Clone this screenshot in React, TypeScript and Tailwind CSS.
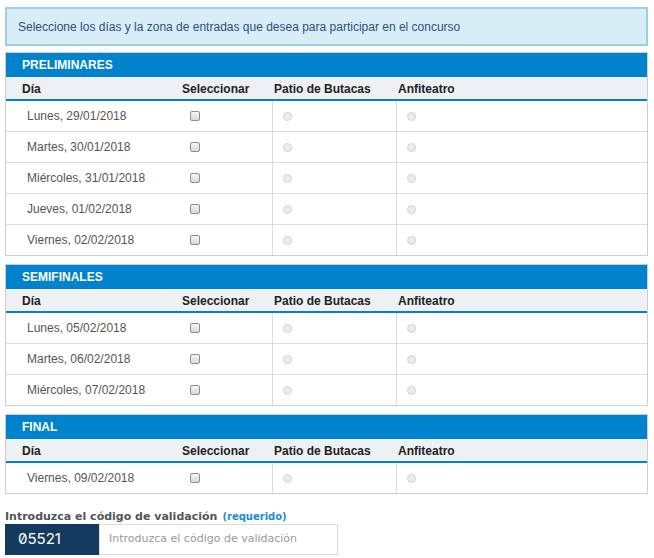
import React from "react";

type Section = { title: string; days: string[] };

const sections: Section[] = [
  {
    title: "PRELIMINARES",
    days: [
      "Lunes, 29/01/2018",
      "Martes, 30/01/2018",
      "Miércoles, 31/01/2018",
      "Jueves, 01/02/2018",
      "Viernes, 02/02/2018",
    ],
  },
  {
    title: "SEMIFINALES",
    days: ["Lunes, 05/02/2018", "Martes, 06/02/2018", "Miércoles, 07/02/2018"],
  },
  { title: "FINAL", days: ["Viernes, 09/02/2018"] },
];

function Checkbox() {
  return (
    <span className="block h-[10px] w-[10px] rounded-[2px] border border-[#8f8f8f] bg-gradient-to-b from-[#f4f4f4] to-[#d9d9d9]" />
  );
}

function Radio() {
  return <span className="block h-[9px] w-[9px] rounded-full border border-[#d2d2d2] bg-[#ececec]" />;
}

function Table({ section }: { section: Section }) {
  return (
    <div className="border border-[#cdcdcd]">
      <div className="flex h-[24px] items-center bg-[#0083cc] pl-[16px] text-[12px] font-bold text-white">
        {section.title}
      </div>
      <div className="grid h-[24px] grid-cols-[170px_96px_124px_1fr] items-center border-b-2 border-[#0083cc] bg-[#edf1f4] pt-[1px] text-[12px] font-bold text-[#222]">
        <div className="pl-[16px]">Día</div>
        <div className="pl-[6px]">Seleccionar</div>
        <div className="pl-[2px]">Patio de Butacas</div>
        <div className="pl-[2px]">Anfiteatro</div>
      </div>
      {section.days.map((d, i) => (
        <div
          key={d}
          className={
            "grid grid-cols-[170px_96px_124px_1fr] items-stretch text-[12px] text-[#555] " +
            (i > 0 ? "h-[31px] border-t border-[#dcdcdc]" : "h-[30px]")
          }
        >
          <div className="flex items-center pl-[21px]">{d}</div>
          <div className="flex items-center pl-[14px]">
            <Checkbox />
          </div>
          <div className="flex items-center border-l border-[#dcdcdc] pl-[10px]">
            <Radio />
          </div>
          <div className="flex items-center border-l border-[#dcdcdc] pl-[10px]">
            <Radio />
          </div>
        </div>
      ))}
    </div>
  );
}

export default function App() {
  return (
    <div
      className="w-[654px] bg-white pl-[5px] pt-[7px]"
      style={{ fontFamily: '"Liberation Sans", Arial, sans-serif' }}
    >
      <div className="flex w-[643px] flex-col">
        <div className="flex h-[39px] items-center border-2 border-[#9ccfe8] bg-[#d9edf7] pl-[11px] text-[12px] text-[#2f4f7a]">
          Seleccione los días y la zona de entradas que desea para participar en el concurso
        </div>
        <div className="mt-[6px] flex flex-col gap-[8px]">
          {sections.map((s) => (
            <Table key={s.title} section={s} />
          ))}
        </div>
        <div
          className="mt-[15px] flex h-[15px] items-baseline gap-[5px] leading-[15px]"
          style={{ fontFamily: '"DejaVu Sans", Verdana, sans-serif' }}
        >
          <span className="text-[11px] font-bold text-[#555]">Introduzca el código de validación</span>
          <span className="text-[10px] font-bold text-[#1a8ccf]">(requerido)</span>
        </div>
        <div className="flex h-[31px]">
          <div
            className="flex w-[94px] items-center bg-[#143a5f] pl-[13px] text-[15px] text-white"
            style={{ fontFamily: 'Inter, "Liberation Sans", sans-serif', fontFeatureSettings: '"zero" 1' }}
          >
            05521
          </div>
          <div
            className="flex w-[239px] items-center border border-[#dcdcdc] pl-[9px] text-[11px] text-[#999]"
            style={{ fontFamily: '"DejaVu Sans", Verdana, sans-serif' }}
          >
            Introduzca el código de validación
          </div>
        </div>
      </div>
    </div>
  );
}
